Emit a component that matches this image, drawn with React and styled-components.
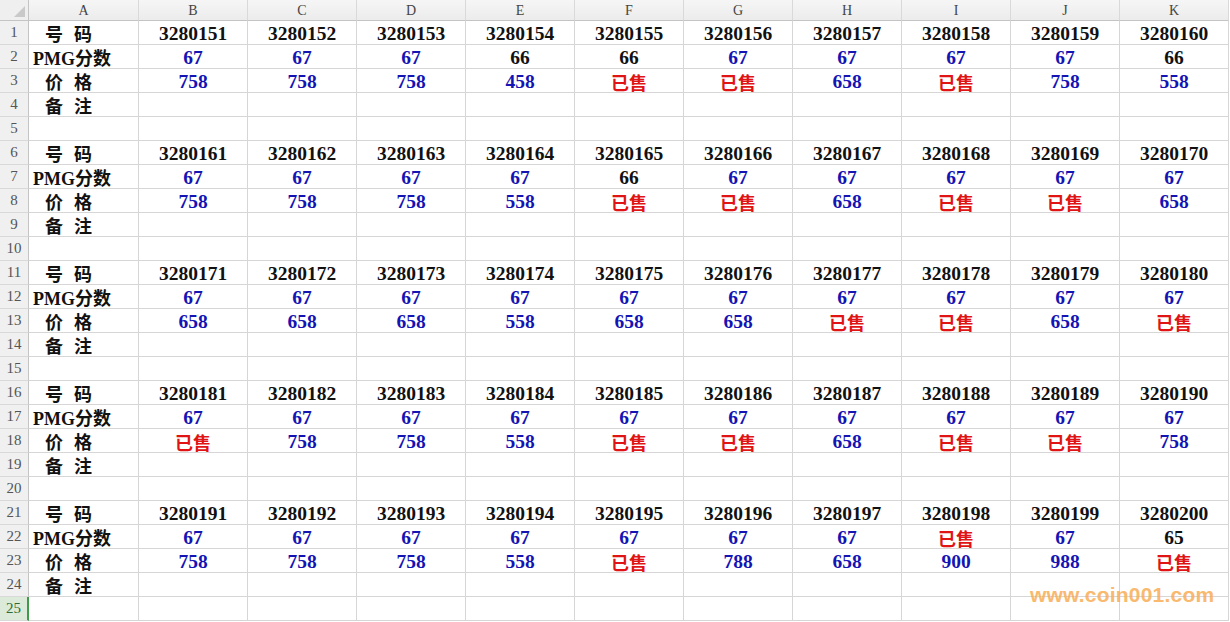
import React from 'react';
import styled, { createGlobalStyle } from 'styled-components';

const GRID = '#d6d6d6';
const HEAD_LINE = '#c4c4c4';
const BLUE = '#1414b4';
const RED = '#e01414';
const INK = '#111111';
const CJK = '"Liberation Serif", "Noto Sans CJK SC", serif';

const COLS = ['A', 'B', 'C', 'D', 'E', 'F', 'G', 'H', 'I', 'J', 'K'];

// each block: first number, PMG scores, prices ('s' = 已售)
const BLOCKS = [
  {
    start: 3280151,
    pmg: [67, 67, 67, 66, 66, 67, 67, 67, 67, 66],
    price: [758, 758, 758, 458, 's', 's', 658, 's', 758, 558],
  },
  {
    start: 3280161,
    pmg: [67, 67, 67, 67, 66, 67, 67, 67, 67, 67],
    price: [758, 758, 758, 558, 's', 's', 658, 's', 's', 658],
  },
  {
    start: 3280171,
    pmg: [67, 67, 67, 67, 67, 67, 67, 67, 67, 67],
    price: [658, 658, 658, 558, 658, 658, 's', 's', 658, 's'],
  },
  {
    start: 3280181,
    pmg: [67, 67, 67, 67, 67, 67, 67, 67, 67, 67],
    price: ['s', 758, 758, 558, 's', 's', 658, 's', 's', 758],
  },
  {
    start: 3280191,
    pmg: [67, 67, 67, 67, 67, 67, 67, 's', 67, 65],
    price: [758, 758, 758, 558, 's', 788, 658, 900, 988, 's'],
  },
];

const GlobalStyle = createGlobalStyle`
  html, body {
    margin: 0;
    padding: 0;
    background: #ffffff;
    overflow: hidden;
  }
  * {
    box-sizing: border-box;
  }
`;

const Page = styled.div`
  position: relative;
  width: 1230px;
  height: 622px;
  overflow: hidden;
  background: #ffffff;
`;

const Sheet = styled.div`
  display: grid;
  grid-template-columns: 29px 110px repeat(10, 109px);
  grid-template-rows: 21px repeat(25, 24px);
`;

const Corner = styled.div`
  position: relative;
  background: #efefef;
  border-right: 1px solid ${HEAD_LINE};
  border-bottom: 1px solid ${HEAD_LINE};

  &::after {
    content: '';
    position: absolute;
    right: 3px;
    bottom: 3px;
    border-left: 11px solid transparent;
    border-bottom: 11px solid #c9c9c9;
  }
`;

const ColHead = styled.div`
  display: flex;
  align-items: center;
  justify-content: center;
  background: linear-gradient(#f6f6f6, #ececec);
  border-right: 1px solid #d9d9d9;
  border-bottom: 1px solid ${HEAD_LINE};
  font-family: "Liberation Serif", serif;
  font-size: 14px;
  color: #444444;
  padding-top: 1px;
`;

const RowHead = styled.div`
  display: flex;
  align-items: center;
  justify-content: center;
  background: ${(p) => (p.$active ? '#dcebd9' : '#f0f0f0')};
  border-right: ${(p) => (p.$active ? '2px solid #3f9b4a' : `1px solid ${HEAD_LINE}`)};
  border-bottom: 1px solid #d9d9d9;
  font-family: "Liberation Serif", serif;
  font-size: 15px;
  color: ${(p) => (p.$active ? '#2e6b34' : '#555555')};
`;

const Cell = styled.div`
  display: flex;
  align-items: center;
  justify-content: center;
  border-right: 1px solid ${GRID};
  border-bottom: 1px solid ${GRID};
  font-family: ${CJK};
  font-weight: 700;
  font-size: ${(p) => (p.$sold ? '18px' : '19.5px')};
  color: ${(p) => p.$tone};
  white-space: nowrap;
  padding-top: 3px;
`;

const LabelCell = styled(Cell)`
  justify-content: flex-start;
  padding-left: ${(p) => (p.$wide ? '4px' : '16px')};
  padding-top: 0;
  gap: 11px;
  font-size: 18px;
  color: ${INK};
`;

const Mark = styled.div`
  position: absolute;
  left: 1030px;
  top: 584px;
  font-family: "Liberation Sans", Arial, sans-serif;
  font-weight: 700;
  font-size: 21px;
  line-height: 1;
  color: #f8ad55;
  opacity: 0.85;
  letter-spacing: 0.2px;
`;

const Label = ({ text }) => {
  if (text.startsWith('PMG')) {
    return <LabelCell $wide>{text}</LabelCell>;
  }
  return (
    <LabelCell>
      {text.split('').map((ch, i) => (
        <span key={i}>{ch}</span>
      ))}
    </LabelCell>
  );
};

const Value = ({ value, kind }) => {
  if (value === 's') {
    return (
      <Cell $tone={RED} $sold>
        已售
      </Cell>
    );
  }
  let tone = BLUE;
  if (kind === 'no') tone = INK;
  if (kind === 'pmg' && value !== 67) tone = INK;
  return <Cell $tone={tone}>{value}</Cell>;
};

const buildRows = () => {
  const rows = [];
  BLOCKS.forEach((block, b) => {
    const nums = Array.from({ length: 10 }, (_, i) => block.start + i);
    rows.push({ label: '号码', values: nums, kind: 'no' });
    rows.push({ label: 'PMG分数', values: block.pmg, kind: 'pmg' });
    rows.push({ label: '价格', values: block.price, kind: 'price' });
    rows.push({ label: '备注', values: Array(10).fill(null), kind: 'note' });
    if (b < BLOCKS.length - 1) {
      rows.push({ label: null, values: Array(10).fill(null), kind: 'gap' });
    }
  });
  rows.push({ label: null, values: Array(10).fill(null), kind: 'gap' });
  return rows;
};

const App = () => {
  const rows = buildRows();

  return (
    <Page>
      <GlobalStyle />
      <Sheet>
        <Corner />
        {COLS.map((c) => (
          <ColHead key={c}>{c}</ColHead>
        ))}

        {rows.map((row, r) => (
          <React.Fragment key={r}>
            <RowHead $active={r === 24}>{r + 1}</RowHead>
            {row.label ? <Label text={row.label} /> : <Cell />}
            {row.values.map((v, i) =>
              v === null ? (
                <Cell key={i} />
              ) : (
                <Value key={i} value={v} kind={row.kind} />
              )
            )}
          </React.Fragment>
        ))}
      </Sheet>
      <Mark>www.coin001.com</Mark>
    </Page>
  );
};

export default App;
